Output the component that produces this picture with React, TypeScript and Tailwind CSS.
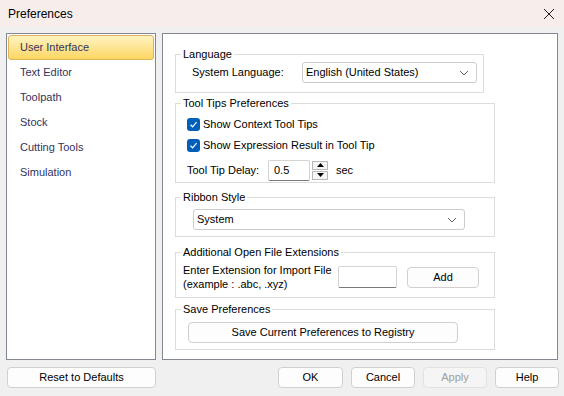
import React from "react";

const font = { fontFamily: '"Liberation Sans", Arial, sans-serif' };

const navItems = ["User Interface", "Text Editor", "Toolpath", "Stock", "Cutting Tools", "Simulation"];

const Chevron: React.FC = () => (
    <svg width="10" height="6" viewBox="0 0 10 6" className="shrink-0">
        <path d="M1 1 L5 5 L9 1" fill="none" stroke="#606060" strokeWidth="1" />
    </svg>
);

const Check: React.FC = () => (
    <span className="w-[13px] h-[13px] rounded-[3px] bg-[#005fb8] flex items-center justify-center shrink-0">
        <svg width="9" height="9" viewBox="0 0 9 9">
            <path d="M1.5 4.8 L3.6 6.8 L7.6 2.2" fill="none" stroke="#ffffff" strokeWidth="1.2" />
        </svg>
    </span>
);

const Btn: React.FC<{ label: string; className?: string }> = ({ label, className }) => (
    <div className={`h-[21px] flex items-center justify-center rounded-[4px] border border-[#d0d0d0] bg-[#fdfdfd] text-black ${className ?? ""}`}>
        {label}
    </div>
);

const Group: React.FC<{ title: string; className?: string; children: React.ReactNode }> = ({ title, className, children }) => (
    <fieldset className={`border border-[#dcdcdc] ${className ?? ""}`}>
        <legend className="ml-[5px] px-[2px] leading-[14px]">{title}</legend>
        {children}
    </fieldset>
);

export default function App() {
    return (
        <div className="w-[564px] h-[396px] bg-[#f0f0f0] text-[11px] text-black overflow-hidden" style={font}>
            <div className="h-[27px] bg-[#f7eeec] flex items-center justify-between pl-[8px] pr-[9px]">
                <span className="text-[12px]">Preferences</span>
                <svg width="12" height="12" viewBox="0 0 12 12">
                    <path d="M1 1 L11 11 M11 1 L1 11" stroke="#1a1a1a" strokeWidth="1" />
                </svg>
            </div>

            <div className="flex gap-[6px] pl-[6px] pt-[6px]">
                <div className="w-[150px] h-[327px] bg-white border border-[#828790] pt-[1px] px-[1px]">
                    {navItems.map((item, i) => (
                        <div
                            key={item}
                            className={`h-[25px] flex items-center pl-[11px] text-[#33335c] ${i === 0 ? "rounded-[3px] border border-[#dcb45c] bg-gradient-to-b from-[#fff3c0] to-[#fdd660]" : "border border-transparent"}`}
                        >
                            {item}
                        </div>
                    ))}
                </div>

                <div className="w-[396px] h-[327px] bg-white border border-[#828790] pl-[12px] pt-[13px]">
                    <Group title="Language" className="w-[309px] pb-[9px]">
                        <div className="flex items-center pl-[16px] pt-[1px]">
                            <span className="w-[110px]">System Language:</span>
                            <div className="w-[175px] h-[21px] flex items-center justify-between pl-[3px] pr-[7px] border border-[#cccccc] rounded-[3px] bg-white">
                                <span>English (United States)</span>
                                <Chevron />
                            </div>
                        </div>
                    </Group>

                    <Group title="Tool Tips Preferences" className="w-[320px] mt-[3px] pb-[1px]">
                        <div className="pl-[11px] pt-[4px]">
                            <div className="h-[21px] flex items-center gap-[3px]">
                                <Check />
                                <span>Show Context Tool Tips</span>
                            </div>
                            <div className="h-[21px] flex items-center gap-[3px]">
                                <Check />
                                <span>Show Expression Result in Tool Tip</span>
                            </div>
                            <div className="h-[22px] mt-[3px] flex items-center">
                                <span className="w-[81px]">Tool Tip Delay:</span>
                                <div className="w-[42px] h-[21px] bg-white border border-[#d4d4d4] border-b-[#7a7a7a] rounded-[2px] flex items-center pl-[5px]">0.5</div>
                                <div className="ml-[2px] w-[16px] flex flex-col gap-[1px]">
                                    <div className="h-[9px] border border-[#b8b8b8] bg-[#f6f6f6] flex items-center justify-center">
                                        <svg width="7" height="4" viewBox="0 0 7 4"><path d="M0 4 L3.5 0 L7 4 Z" fill="#000" /></svg>
                                    </div>
                                    <div className="h-[9px] border border-[#b8b8b8] bg-[#f6f6f6] flex items-center justify-center">
                                        <svg width="7" height="4" viewBox="0 0 7 4"><path d="M0 0 L3.5 4 L7 0 Z" fill="#000" /></svg>
                                    </div>
                                </div>
                                <span className="ml-[8px]">sec</span>
                            </div>
                        </div>
                    </Group>

                    <Group title="Ribbon Style" className="w-[320px] mt-[7px] pb-[6px]">
                        <div className="pl-[17px] pt-[5px]">
                            <div className="w-[272px] h-[21px] flex items-center justify-between pl-[3px] pr-[7px] border border-[#cccccc] rounded-[3px] bg-white">
                                <span>System</span>
                                <Chevron />
                            </div>
                        </div>
                    </Group>

                    <Group title="Additional Open File Extensions" className="w-[320px] mt-[8px] pb-[6px]">
                        <div className="flex items-center pl-[7px] pt-[4px]">
                            <div className="w-[155px] leading-[14px]">
                                <div>Enter Extension for Import File</div>
                                <div>(example : .abc, .xyz)</div>
                            </div>
                            <div className="w-[59px] h-[22px] bg-white border border-[#d4d4d4] border-b-[#7a7a7a] rounded-[2px]" />
                            <Btn label="Add" className="w-[72px] ml-[10px]" />
                        </div>
                    </Group>

                    <Group title="Save Preferences" className="w-[320px] mt-[4px] pb-[6px]">
                        <div className="pl-[12px] pt-[6px]">
                            <Btn label="Save Current Preferences to Registry" className="w-[270px]" />
                        </div>
                    </Group>
                </div>
            </div>

            <div className="flex items-center pl-[7px] mt-[7px]">
                <Btn label="Reset to Defaults" className="w-[149px]" />
                <div className="flex gap-[8px] ml-[122px]">
                    <Btn label="OK" className="w-[65px] border-[#005fb8]" />
                    <Btn label="Cancel" className="w-[64px]" />
                    <div className="w-[64px] h-[21px] flex items-center justify-center rounded-[4px] border border-[#e2e2e2] bg-[#f5f5f5] text-[#a0a0a0]">Apply</div>
                    <Btn label="Help" className="w-[64px]" />
                </div>
            </div>
        </div>
    );
}
